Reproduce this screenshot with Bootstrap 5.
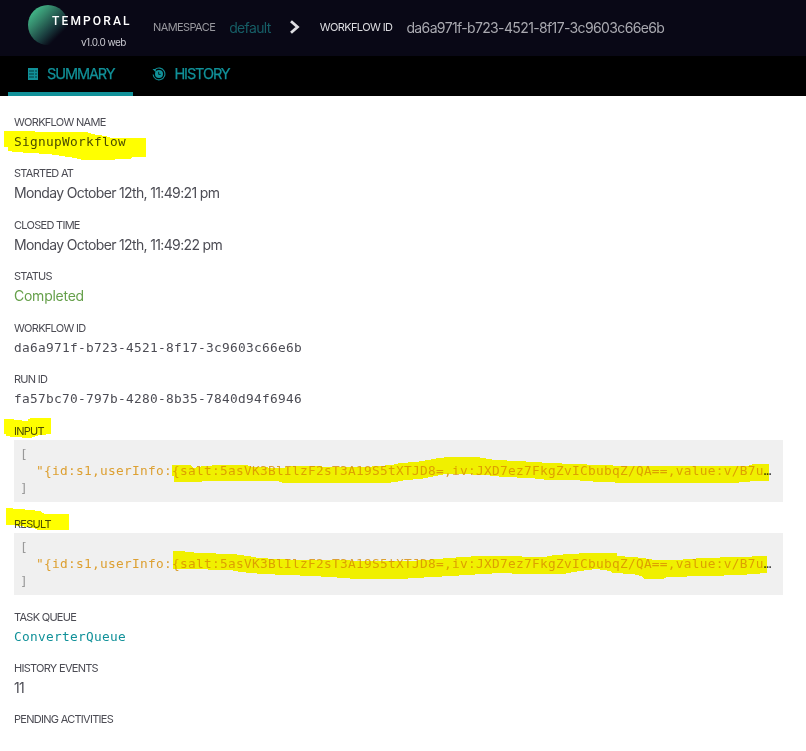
<!DOCTYPE html>
<html lang="en">
<head>
<meta charset="utf-8">
<meta name="viewport" content="width=device-width, initial-scale=1">
<title>Temporal – Workflow summary</title>
<link rel="stylesheet" href="https://cdn.jsdelivr.net/npm/bootstrap@5.3.0/dist/css/bootstrap.min.css">
<style>
body{font-family:Inter,"Liberation Sans",sans-serif;font-size:14px;letter-spacing:-.65px;color:#4c4c54;background:#fff;overflow:hidden}
.topbar{height:56px;background:#090816;white-space:nowrap;padding-bottom:2px}
.brand{width:104px;height:54px;margin-left:28px}
.brand-name{left:24px;top:12px;font:500 12px/18px Roboto,sans-serif;letter-spacing:2.15px;color:#fff}
.brand-version{left:53px;top:35px;font-size:10px;line-height:15px;letter-spacing:-.51px;color:#c8c8cf}
.crumb-label{font-size:11px;letter-spacing:-.6px;color:#98989e}
.crumb-first{margin-left:21px}
.crumb-current{color:#dcdce0;margin-left:19px}
.crumb-link{color:#165e66;margin-left:14px}
.crumb-arrow{margin-left:18px}
.crumb-id{color:#a9a9b0;margin-left:14px;letter-spacing:-.63px}
.tabs{height:40px;background:#000}
.tab-link{height:40px;color:#119199;font-size:14.5px;letter-spacing:-1.1px;padding:0 19px 0 19px;border-bottom:4px solid transparent;-webkit-text-stroke:.25px #119199}
.tab-link.current{border-color:#119199}
.details{padding:17px 23px 0 14px}
.field{margin-bottom:11.400px}
.field-label{font-size:11px;line-height:18px;letter-spacing:-.72px}
.field-value{line-height:22px;margin:0}
.mono{font-family:"DejaVu Sans Mono",monospace;font-size:12.8px;letter-spacing:.294px}
.done{color:#66a04b;letter-spacing:-.25px}
.queue{color:#119199}
.payload-field{padding-top:.4px;margin-bottom:12.400px}
.payload{background:#f0f0f0;height:62.400px;margin:0;padding:5px 6px;font:12.8px/17px "DejaVu Sans Mono",monospace;letter-spacing:.294px;color:#999;overflow:hidden}
.payload .str{color:#dda032}
.payload .cut{color:#444}
.marker{mix-blend-mode:multiply;pointer-events:none}
</style>
</head>
<body>
<header class="topbar d-flex align-items-center">
  <div class="brand position-relative flex-shrink-0">
    <svg class="position-absolute top-0 start-0" width="42" height="50" viewBox="0 0 42 50">
      <defs><linearGradient id="orb" x1=".15" y1=".12" x2=".78" y2=".76"><stop offset="0" stop-color="#42b688"/><stop offset=".3" stop-color="#34866a"/><stop offset=".72" stop-color="#193b3d"/><stop offset="1" stop-color="#090816"/></linearGradient></defs>
      <circle cx="20" cy="25" r="20" fill="url(#orb)"/>
    </svg>
    <span class="brand-name position-absolute">TEMPORAL</span>
    <span class="brand-version position-absolute">v1.0.0 web</span>
  </div>
  <span class="crumb-label crumb-first">NAMESPACE</span>
  <span class="crumb-link">default</span>
  <svg class="crumb-arrow" width="12" height="14" viewBox="0 0 12 14"><path d="M2 1.200 8.500 7 2 12.800" fill="none" stroke="#dedee2" stroke-width="2.800"/></svg>
  <span class="crumb-label crumb-current">WORKFLOW ID</span>
  <span class="crumb-id">da6a971f-b723-4521-8f17-3c9603c66e6b</span>
</header>
<nav class="tabs d-flex ps-2">
  <a class="tab-link current d-flex align-items-center text-decoration-none" href="#">
    <svg class="me-2" width="12" height="14" viewBox="0 0 12 14"><path fill="#119199" d="M1 1h10v12H1z"/><path d="M2 4h5M2 7h5M2 10h5M8 4h2M8 7h2M8 10h2" stroke="#000" stroke-width=".6"/></svg>SUMMARY</a>
  <a class="tab-link d-flex align-items-center text-decoration-none" href="#">
    <svg class="me-2" width="14" height="14" viewBox="0 0 14 14"><path d="M3 2.600A5.900 5.900 0 1 1 1.100 7.500" fill="none" stroke="#119199" stroke-width="1.100"/><path d="M.5 2h3.300v3.300z" fill="#119199"/><circle cx="7" cy="7" r="4" fill="#119199"/><path d="M6.700 4.800v2.600H8.700" fill="none" stroke="#000" stroke-width=".8"/></svg>HISTORY</a>
</nav>
<main class="details">
  <section class="field"><div class="field-label">WORKFLOW NAME</div><p class="field-value mono">SignupWorkflow</p></section>
  <section class="field"><div class="field-label">STARTED AT</div><p class="field-value">Monday October 12th, 11:49:21 pm</p></section>
  <section class="field"><div class="field-label">CLOSED TIME</div><p class="field-value">Monday October 12th, 11:49:22 pm</p></section>
  <section class="field"><div class="field-label">STATUS</div><p class="field-value done">Completed</p></section>
  <section class="field"><div class="field-label">WORKFLOW ID</div><p class="field-value mono">da6a971f-b723-4521-8f17-3c9603c66e6b</p></section>
  <section class="field"><div class="field-label">RUN ID</div><p class="field-value mono">fa57bc70-797b-4280-8b35-7840d94f6946</p></section>
  <section class="payload-field"><div class="field-label">INPUT</div>
<pre class="payload">[
  <span class="str">"{id:s1,userInfo:{salt:5asVK3BlIlzF2sT3A19S5tXTJD8=,iv:JXD7ez7FkgZvICbubqZ/QA==,value:v/B7u</span><span class="cut">…</span>
]</pre></section>
  <section class="payload-field"><div class="field-label">RESULT</div>
<pre class="payload">[
  <span class="str">"{id:s1,userInfo:{salt:5asVK3BlIlzF2sT3A19S5tXTJD8=,iv:JXD7ez7FkgZvICbubqZ/QA==,value:v/B7u</span><span class="cut">…</span>
]</pre></section>
  <section class="field"><div class="field-label">TASK QUEUE</div><p class="field-value mono queue">ConverterQueue</p></section>
  <section class="field"><div class="field-label">HISTORY EVENTS</div><p class="field-value">11</p></section>
  <section class="field"><div class="field-label">PENDING ACTIVITIES</div></section>
</main>
<!-- Highlighter strokes over the page -->
<svg class="marker position-absolute top-0 start-0" width="806" height="751" viewBox="0 0 806 751" fill="#ff0" shape-rendering="crispEdges">
  <path d="M4 131H13L56 132H86L92 134 105 136 112 138H146V157H133L130 159H118L112 160H83L75 158 62 156 48 154 30 153 15 152 8 151V147H4z"/>
  <path d="M4 419H12L15 420 28 421V419L31 418H51V434L40 435 30 438 14 437 6 436V434H4z"/>
  <path d="M172 465H190L194 468 203 466 220 465H247L252 467 283 468 292 466H310L333 467H365L392 465 400 463 416 462 428 460 439 458 448 457H477L495 460 518 461 550 463 573 464 600 465 625 466H747L754 464H769V481H755L734 483H631L599 482 573 480H548L530 478 503 477 485 475 460 474H445L430 477 420 479 405 480 395 482 386 483H283L277 481H230L174 482V476H172z"/>
  <path d="M6 508 20 509 30 510 40 511 45 514H69V530H38L34 528 20 526 12 525H6z"/>
  <path d="M173 551H181L198 553 233 554 248 556 259 558 276 559 300 560 400 561H412L436 559 462 557 480 556H500L544 557 555 555 587 553H617V556L633 557 643 558 655 560H676L703 558 737 557 767 556V573L740 575 707 576 667 577 663 579H645L641 576 633 574 613 573 610 571 597 569 587 570 573 572 563 574H523L500 573 467 575 450 576 433 577 415 578 400 579H356L330 577 312 576 262 574 240 572 230 570 186 569H173z"/>
</svg>
<script src="https://cdn.jsdelivr.net/npm/bootstrap@5.3.0/dist/js/bootstrap.bundle.min.js"></script>
</body>
</html>
